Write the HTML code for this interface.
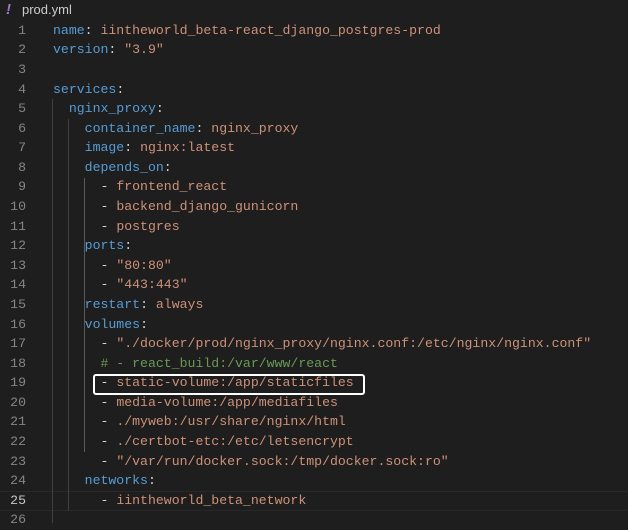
<!DOCTYPE html>
<html><head><style>
body{margin:0;width:628px;height:523px;background:#1e1e1e;overflow:hidden;font-family:"Liberation Mono",monospace;font-size:13.2px;position:relative}
.hdr{position:absolute;left:0;top:0;width:628px;height:20px;font-family:"Liberation Sans",sans-serif;font-size:13px;color:#cccccc}
.hdr .ex{position:absolute;left:6px;top:1px;color:#a074c4;font-weight:bold;font-style:italic;font-size:15px}
.hdr .nm{position:absolute;left:22px;top:2px}
.ln{position:absolute;left:0;width:26px;text-align:right;color:#858585;height:19.58px;line-height:19.58px}
.c{position:absolute;left:53px;white-space:pre;color:#d4d4d4;height:19.58px;line-height:19.58px}
.k{color:#569cd6}.s{color:#ce9178}.m{color:#6a9955}
.g{position:absolute;width:1px;background:#404040}
</style></head><body>
<div class="hdr"><span class="ex">!</span><span class="nm">prod.yml</span></div>
<div style="position:absolute;left:0;top:491px;width:628px;height:18px;border-top:1px solid #282828;border-bottom:1px solid #282828"></div>
<div class="g" style="left:52px;top:99px;height:424px"></div>
<div class="g" style="left:68px;top:119px;height:392px"></div>
<div class="g" style="left:84px;top:178px;height:274px;background:#5a5a5a"></div>
<div id="lines"></div>
<div style="position:absolute;left:93px;top:374px;width:268px;height:17px;border:2px solid #fff;border-radius:3px"></div>
<script>
var L=[
'<span class="k">name</span>: <span class="s">iintheworld_beta-react_django_postgres-prod</span>',
'<span class="k">version</span>: <span class="s">"3.9"</span>',
'',
'<span class="k">services</span>:',
'  <span class="k">nginx_proxy</span>:',
'    <span class="k">container_name</span>: <span class="s">nginx_proxy</span>',
'    <span class="k">image</span>: <span class="s">nginx:latest</span>',
'    <span class="k">depends_on</span>:',
'      - <span class="s">frontend_react</span>',
'      - <span class="s">backend_django_gunicorn</span>',
'      - <span class="s">postgres</span>',
'    <span class="k">ports</span>:',
'      - <span class="s">"80:80"</span>',
'      - <span class="s">"443:443"</span>',
'    <span class="k">restart</span>: <span class="s">always</span>',
'    <span class="k">volumes</span>:',
'      - <span class="s">"./docker/prod/nginx_proxy/nginx.conf:/etc/nginx/nginx.conf"</span>',
'      <span class="m"># - react_build:/var/www/react</span>',
'      - <span class="s">static-volume:/app/staticfiles</span>',
'      - <span class="s">media-volume:/app/mediafiles</span>',
'      - <span class="s">./myweb:/usr/share/nginx/html</span>',
'      - <span class="s">./certbot-etc:/etc/letsencrypt</span>',
'      - <span class="s">"/var/run/docker.sock:/tmp/docker.sock:ro"</span>',
'    <span class="k">networks</span>:',
'      - <span class="s">iintheworld_beta_network</span>',
''];
var h='';
for(var i=0;i<26;i++){var t=20.8+i*19.58;
h+='<div class="ln" style="top:'+t+'px'+(i==24?';color:#c6c6c6':'')+'">'+(i+1)+'</div>';
h+='<div class="c" style="top:'+t+'px">'+L[i]+'</div>';}
document.getElementById('lines').innerHTML=h;
</script>
</body></html>
